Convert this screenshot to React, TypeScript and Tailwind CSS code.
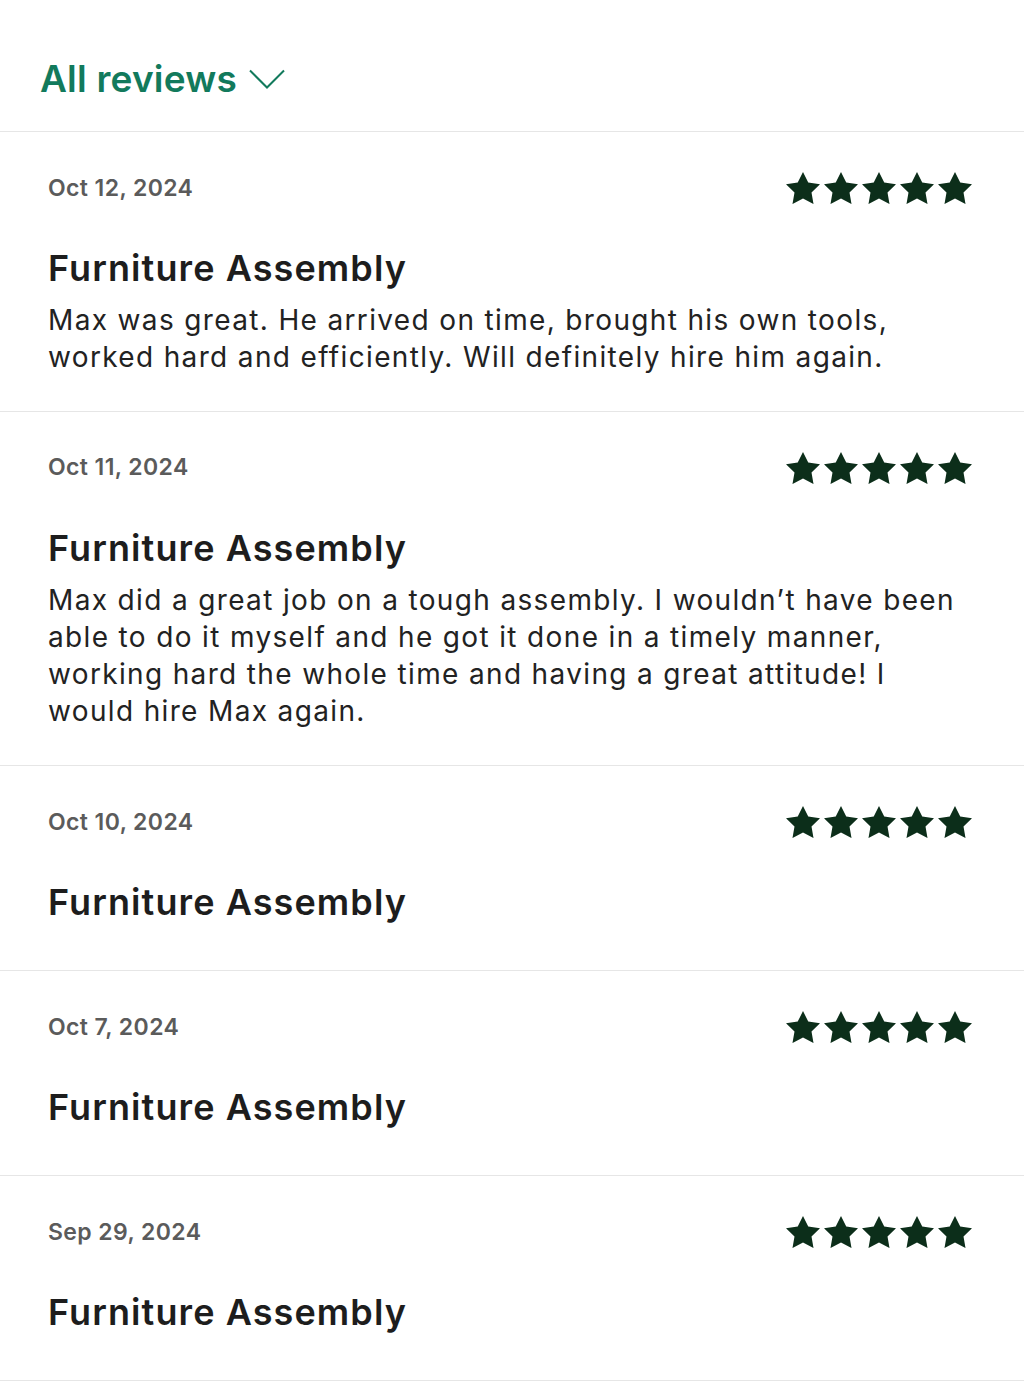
const reviews = [
  {
    date: "Oct 12, 2024",
    body: "Max was great. He arrived on time, brought his own tools, worked hard and efficiently. Will definitely hire him again.",
  },
  {
    date: "Oct 11, 2024",
    body: "Max did a great job on a tough assembly. I wouldn’t have been able to do it myself and he got it done in a timely manner, working hard the whole time and having a great attitude! I would hire Max again.",
  },
  { date: "Oct 10, 2024" },
  { date: "Oct 7, 2024" },
  { date: "Sep 29, 2024" },
];

function Star() {
  return (
    <svg width="34" height="32" viewBox="2 2 20 19" preserveAspectRatio="none" aria-hidden>
      <polygon
        fill="#0c2e1a"
        points="12,2 15.09,8.26 22,9.27 17,14.14 18.18,21.02 12,17.77 5.82,21.02 7,14.14 2,9.27 8.91,8.26"
      />
    </svg>
  );
}

function Stars() {
  return (
    <div className="flex gap-1" aria-label="5 stars">
      {[0, 1, 2, 3, 4].map((i) => (
        <Star key={i} />
      ))}
    </div>
  );
}

function ReviewItem({ date, body }: { date: string; body?: string }) {
  return (
    <div
      className={`border-b border-[#e6e6e6] pl-12 pr-[52px] pt-9 ${body ? "pb-[34px]" : "pb-[46px]"}`}
    >
      <div className="flex h-10 items-center justify-between">
        <span className="text-[23px] font-semibold tracking-[0.4px] text-[#5b5b5b]">{date}</span>
        <Stars />
      </div>
      <h3 className="mt-[38px] text-[36px] font-semibold leading-[44px] tracking-[1.1px] text-[#1d1d1d]">
        Furniture Assembly
      </h3>
      {body && (
        <p className="mt-3 text-[28px] leading-[37.3px] tracking-[1.35px] text-[#222]">{body}</p>
      )}
    </div>
  );
}

export default function App() {
  return (
    <div className="min-h-screen bg-white font-['Inter',sans-serif]">
      <div className="flex h-[132px] items-start border-b border-[#e6e6e6] pl-10 pt-[55px]">
        <button className="flex items-center gap-3 text-[37px] font-semibold leading-[48px] tracking-[0.2px] text-[#127a5c]">
          All reviews
          <svg width="36" height="20" viewBox="0 0 36 20" fill="none" aria-hidden>
            <path d="M1 1.5 L18 18.5 L35 1.5" stroke="#127a5c" strokeWidth="2" />
          </svg>
        </button>
      </div>
      {reviews.map((r) => (
        <ReviewItem key={r.date} date={r.date} body={r.body} />
      ))}
    </div>
  );
}
